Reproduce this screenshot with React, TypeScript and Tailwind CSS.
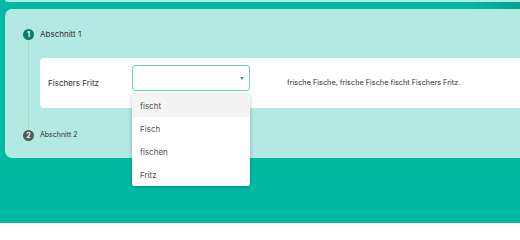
const options = ["fischt", "Fisch", "fischen", "Fritz"];

function StepBadge({ n, active }: { n: number; active: boolean }) {
  return (
    <div
      className={`flex h-[11px] w-[11px] shrink-0 items-center justify-center rounded-full text-[7px] font-bold leading-none text-white ${
        active ? "bg-[#0b7d6f]" : "bg-[#555c5b]"
      }`}
    >
      {n}
    </div>
  );
}

function GapSelect() {
  return (
    <div className="relative mb-[10px] w-[118px] shrink-0">
      <div className="flex h-[26px] items-center justify-end rounded-[3px] border border-[#6fcdbf] bg-white pr-[5px]">
        <span className="h-0 w-0 border-x-[2.5px] border-t-[3px] border-x-transparent border-t-[#26a69a]" />
      </div>
      <ul className="absolute left-0 top-[29px] z-10 w-full rounded-[2px] bg-white shadow-[0_1px_4px_rgba(0,0,0,0.25)]">
        {options.map((option, index) => (
          <li
            key={option}
            className={`flex h-[23px] items-center pl-[8px] text-[8px] text-[#505050] ${
              index === 0 ? "bg-[#f4f4f4]" : ""
            }`}
          >
            {option}
          </li>
        ))}
      </ul>
    </div>
  );
}

export default function App() {
  return (
    <div
      className="h-[223px] w-[520px] overflow-hidden bg-[#00b9a3] pl-[5px]"
      style={{ fontFamily: "Inter, 'Liberation Sans', sans-serif" }}
    >
      <div className="h-[2px] w-[600px] rounded-bl-[6px] bg-[#b3e9e3]" />
      <div className="h-[7px] w-[515px] bg-gradient-to-r from-transparent from-[90%] to-[#00a591]" />
      <section className="h-[149px] w-[600px] rounded-[7px] bg-[#b3e9e3] pl-[18px] pt-[19px]">
        <div className="flex items-center gap-[6px]">
          <StepBadge n={1} active />
          <span className="text-[8px] text-[#2f2f2f]">Abschnitt 1</span>
        </div>

        <div className="flex">
          <div className="flex w-[11px] shrink-0 justify-center">
            <div className="w-px bg-[#a6d9d1]" />
          </div>
          <div className="flex-1 pb-[22px] pl-[6px] pt-[18px]">
            <div className="flex h-[50px] items-center rounded-l-[4px] bg-white pl-[8px] text-[8px] text-[#2f2f2f]">
              <span className="w-[84px] shrink-0">Fischers Fritz</span>
              <GapSelect />
              <span className="ml-[37px] whitespace-nowrap text-[7.3px]">
                frische Fische, frische Fische fischt Fischers Fritz.
              </span>
            </div>
          </div>
        </div>

        <div className="flex items-center gap-[6px]">
          <StepBadge n={2} active={false} />
          <span className="text-[7px] text-[#2f2f2f]">Abschnitt 2</span>
        </div>
      </section>
    </div>
  );
}
